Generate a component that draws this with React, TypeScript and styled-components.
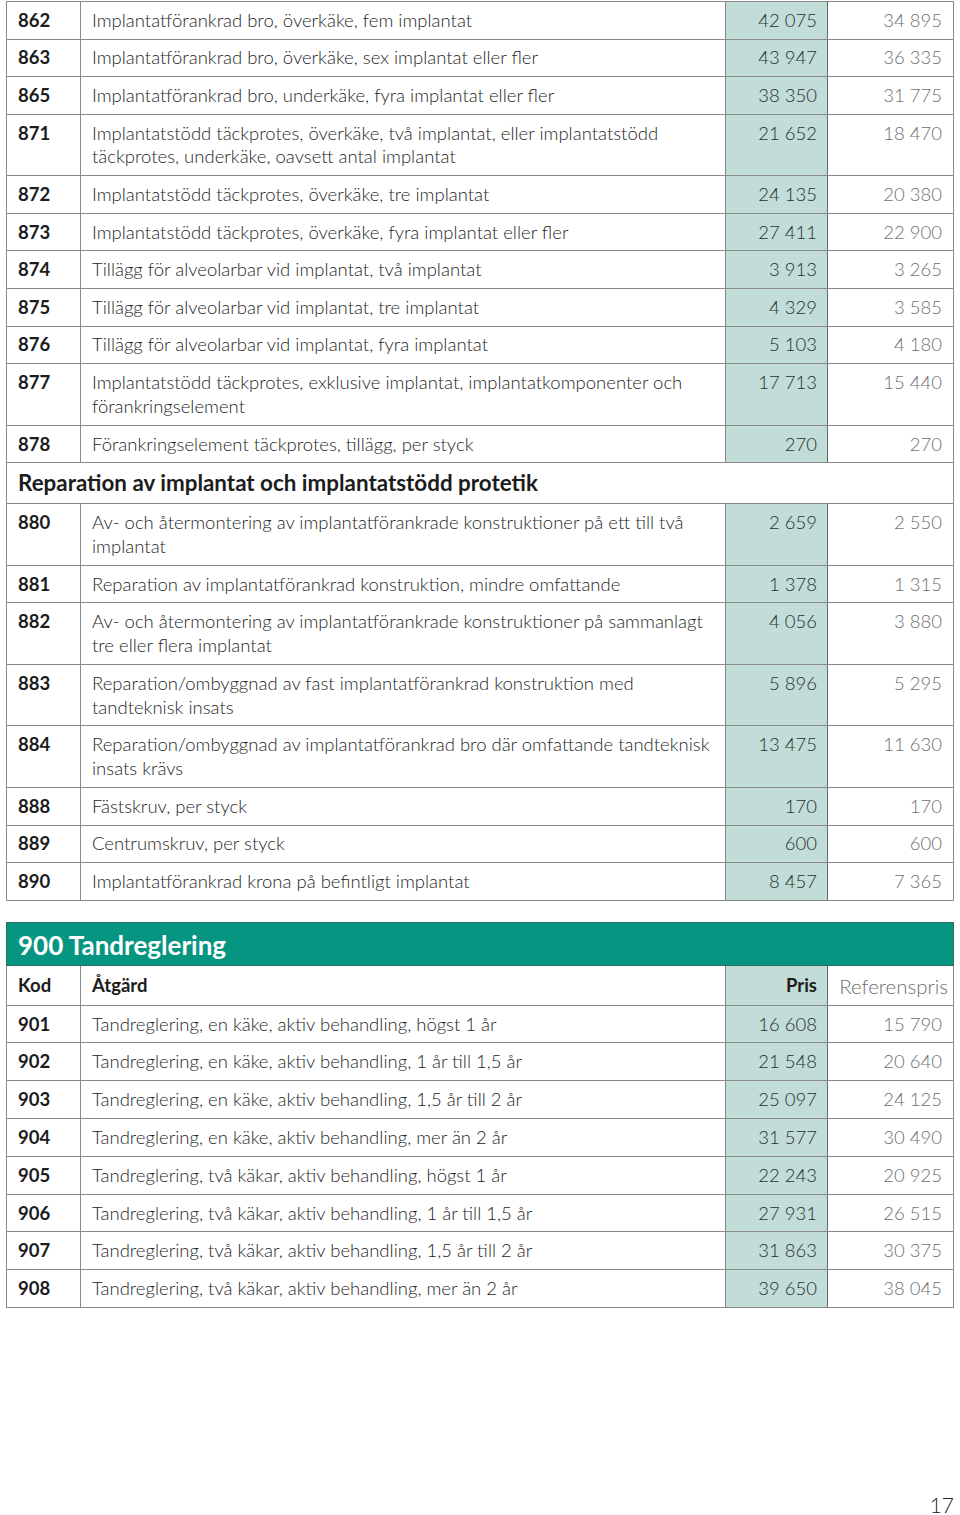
import React from "react";
import styled, { createGlobalStyle } from "styled-components";

const Global = createGlobalStyle`
  html, body { margin: 0; padding: 0; background: #fff; }
  body { font-family: Lato, "Open Sans", "Liberation Sans", sans-serif; }
`;

const Page = styled.div`
  width: 960px;
  height: 1515px;
  box-sizing: border-box;
  padding: 1px 7px 0 6px;
  display: flex;
  flex-direction: column;
  position: relative;
`;

const Table = styled.table`
  width: 947px;
  border-collapse: collapse;
  table-layout: fixed;
  font-size: 18.5px;
  line-height: 23.9px;
`;

const Col = styled.col<{ $w: number }>`
  width: ${(p) => p.$w}px;
`;

const Cell = styled.td`
  border: 1px solid #8a8a8a;
  padding: 6.8px 11px 5.9px 11px;
  vertical-align: top;
  color: #262626;
  font-weight: 300;
`;

const CodeCell = styled(Cell)`
  font-weight: 700;
  color: #1c1c1c;
`;

const PriceCell = styled(Cell)`
  background: #c2dcd8;
  text-align: right;
  padding-right: 10px;
  border-left-color: #56716c;
  border-right-color: #56716c;
  color: #26302e;
`;

const RefCell = styled(Cell)`
  text-align: right;
  color: #6f6f6f;
`;

const SectionCell = styled.td`
  border: 1px solid #8a8a8a;
  padding: 7px 11px 8px 11px;
  font-size: 22.4px;
  font-weight: 700;
  line-height: 25px;
  color: #1c1c1c;
`;

const Spacer = styled.div`
  height: 21px;
`;

const GreenHead = styled.td`
  background: #059580;
  border: 1px solid #2d6d62;
  color: #fff;
  font-size: 26px;
  font-weight: 700;
  line-height: 30px;
  padding: 7px 11px 5px 11px;
`;

const HeadCell = styled(CodeCell)`
  padding-top: 8px;
  padding-bottom: 7px;
`;

const HeadPrice = styled(PriceCell)`
  font-weight: 700;
  color: #1c1c1c;
  padding-top: 8px;
  padding-bottom: 7px;
`;

const HeadRef = styled(RefCell)`
  font-size: 20.5px;
  padding: 9px 5px 6px 5px;
  color: #6e6e6e;
`;

const SecondBody = styled.tbody`
  td {
    padding-top: 7px;
    padding-bottom: 5.9px;
  }
`;

const PageNo = styled.div`
  position: absolute;
  right: 6px;
  bottom: -2px;
  font-size: 21px;
  font-weight: 300;
  color: #222;
`;

type Row = [string, string, string, string] | { section: string };

const rows1: Row[] = [
  ["862", "Implantatförankrad bro, överkäke, fem implantat", "42 075", "34 895"],
  ["863", "Implantatförankrad bro, överkäke, sex implantat eller fler", "43 947", "36 335"],
  ["865", "Implantatförankrad bro, underkäke, fyra implantat eller fler", "38 350", "31 775"],
  ["871", "Implantatstödd täckprotes, överkäke, två implantat, eller implantatstödd täckprotes, underkäke, oavsett antal implantat", "21 652", "18 470"],
  ["872", "Implantatstödd täckprotes, överkäke, tre implantat", "24 135", "20 380"],
  ["873", "Implantatstödd täckprotes, överkäke, fyra implantat eller fler", "27 411", "22 900"],
  ["874", "Tillägg för alveolarbar vid implantat, två implantat", "3 913", "3 265"],
  ["875", "Tillägg för alveolarbar vid implantat, tre implantat", "4 329", "3 585"],
  ["876", "Tillägg för alveolarbar vid implantat, fyra implantat", "5 103", "4 180"],
  ["877", "Implantatstödd täckprotes, exklusive implantat, implantatkomponenter och förankringselement", "17 713", "15 440"],
  ["878", "Förankringselement täckprotes, tillägg, per styck", "270", "270"],
  { section: "Reparation av implantat och implantatstödd protetik" },
  ["880", "Av- och återmontering av implantatförankrade konstruktioner på ett till två implantat", "2 659", "2 550"],
  ["881", "Reparation av implantatförankrad konstruktion, mindre omfattande", "1 378", "1 315"],
  ["882", "Av- och återmontering av implantatförankrade konstruktioner på sammanlagt tre eller flera implantat", "4 056", "3 880"],
  ["883", "Reparation/ombyggnad av fast implantatförankrad konstruktion med tandteknisk insats", "5 896", "5 295"],
  ["884", "Reparation/ombyggnad av implantatförankrad bro där omfattande tandteknisk insats krävs", "13 475", "11 630"],
  ["888", "Fästskruv, per styck", "170", "170"],
  ["889", "Centrumskruv, per styck", "600", "600"],
  ["890", "Implantatförankrad krona på befintligt implantat", "8 457", "7 365"],
];

const rows2: Row[] = [
  ["901", "Tandreglering, en käke, aktiv behandling, högst 1 år", "16 608", "15 790"],
  ["902", "Tandreglering, en käke, aktiv behandling, 1 år till 1,5 år", "21 548", "20 640"],
  ["903", "Tandreglering, en käke, aktiv behandling, 1,5 år till 2 år", "25 097", "24 125"],
  ["904", "Tandreglering, en käke, aktiv behandling, mer än 2 år", "31 577", "30 490"],
  ["905", "Tandreglering, två käkar, aktiv behandling, högst 1 år", "22 243", "20 925"],
  ["906", "Tandreglering, två käkar, aktiv behandling, 1 år till 1,5 år", "27 931", "26 515"],
  ["907", "Tandreglering, två käkar, aktiv behandling, 1,5 år till 2 år", "31 863", "30 375"],
  ["908", "Tandreglering, två käkar, aktiv behandling, mer än 2 år", "39 650", "38 045"],
];

const Cols = () => (
  <colgroup>
    <Col $w={74} />
    <Col $w={645} />
    <Col $w={102} />
    <Col $w={126} />
  </colgroup>
);

const Body = ({ rows }: { rows: Row[] }) => (
  <>
    {rows.map((r, i) =>
      Array.isArray(r) ? (
        <tr key={i}>
          <CodeCell>{r[0]}</CodeCell>
          <Cell>{r[1]}</Cell>
          <PriceCell>{r[2]}</PriceCell>
          <RefCell>{r[3]}</RefCell>
        </tr>
      ) : (
        <tr key={i}>
          <SectionCell colSpan={4}>{r.section}</SectionCell>
        </tr>
      )
    )}
  </>
);

export default function App() {
  return (
    <>
      <Global />
      <Page>
        <Table>
          <Cols />
          <tbody>
            <Body rows={rows1} />
          </tbody>
        </Table>
        <Spacer />
        <Table>
          <Cols />
          <thead>
            <tr>
              <GreenHead colSpan={4}>900 Tandreglering</GreenHead>
            </tr>
            <tr>
              <HeadCell>Kod</HeadCell>
              <HeadCell>Åtgärd</HeadCell>
              <HeadPrice>Pris</HeadPrice>
              <HeadRef>Referenspris</HeadRef>
            </tr>
          </thead>
          <SecondBody>
            <Body rows={rows2} />
          </SecondBody>
        </Table>
        <PageNo>17</PageNo>
      </Page>
    </>
  );
}
